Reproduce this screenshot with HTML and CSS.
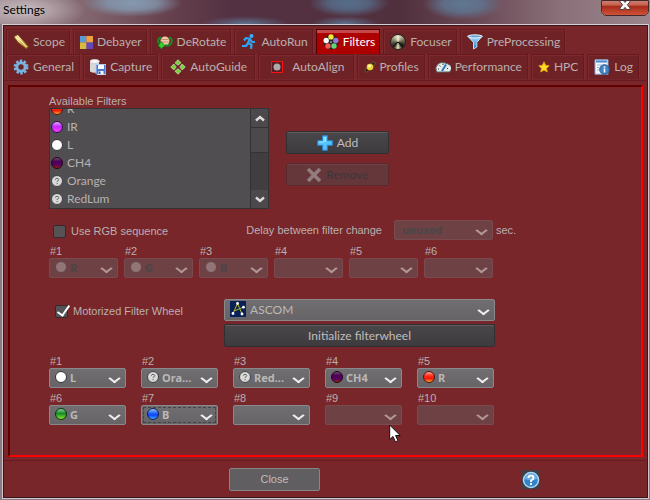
FILE: index.html
```html
<!DOCTYPE html>
<html lang="en">
<head>
<meta charset="utf-8">
<title>Settings</title>
<link rel="stylesheet" href="styles.css">
</head>
<body>
<svg class="defs" width="0" height="0" aria-hidden="true">
  <defs>
    <linearGradient id="gRed" x2="0" y2="1"><stop offset="0" stop-color="#ffb9a0"/><stop offset=".4" stop-color="#ff2a1c"/><stop offset=".65" stop-color="#f01808"/><stop offset="1" stop-color="#ffc038"/></linearGradient>
    <linearGradient id="gIr" x2="0" y2="1"><stop offset="0" stop-color="#e9b6ff"/><stop offset=".45" stop-color="#c02cff"/><stop offset="1" stop-color="#ff3cff"/></linearGradient>
    <linearGradient id="gCh4" x2="0" y2="1"><stop offset="0" stop-color="#7d5478"/><stop offset=".35" stop-color="#4a0058"/><stop offset=".7" stop-color="#5c0060"/><stop offset="1" stop-color="#a02800"/></linearGradient>
    <linearGradient id="gGreen" x2="0" y2="1"><stop offset="0" stop-color="#9ad8a0"/><stop offset=".45" stop-color="#148a28"/><stop offset="1" stop-color="#8cf02c"/></linearGradient>
    <linearGradient id="gBlue" x2="0" y2="1"><stop offset="0" stop-color="#a4ccff"/><stop offset=".45" stop-color="#1c60f0"/><stop offset=".6" stop-color="#1040ff"/><stop offset="1" stop-color="#40b8ff"/></linearGradient>
    <linearGradient id="gGold" x2="1" y2="1"><stop offset="0" stop-color="#fff2b0"/><stop offset="1" stop-color="#c08820"/></linearGradient>
    <linearGradient id="gSky" x2="0" y2="1"><stop offset="0" stop-color="#a8e4ff"/><stop offset="1" stop-color="#2878c8"/></linearGradient>
    <symbol id="red" viewBox="0 0 12 12"><circle cx="6" cy="6" r="5.500" fill="url(#gRed)" stroke="#501010"/></symbol>
    <symbol id="ir" viewBox="0 0 12 12"><circle cx="6" cy="6" r="5.500" fill="url(#gIr)" stroke="#301040"/></symbol>
    <symbol id="white" viewBox="0 0 12 12"><circle cx="6" cy="6" r="5.500" fill="#fff" stroke="#333"/></symbol>
    <symbol id="ch4" viewBox="0 0 12 12"><circle cx="6" cy="6" r="5.500" fill="url(#gCh4)" stroke="#200818"/></symbol>
    <symbol id="green" viewBox="0 0 12 12"><circle cx="6" cy="6" r="5.500" fill="url(#gGreen)" stroke="#083010"/></symbol>
    <symbol id="blue" viewBox="0 0 12 12"><circle cx="6" cy="6" r="5.500" fill="url(#gBlue)" stroke="#102050"/></symbol>
    <symbol id="unknown" viewBox="0 0 12 12"><circle cx="6" cy="6" r="5.500" fill="#d8d8d8" stroke="#444"/><path d="M4.400 4.700Q4.400 3.300 6 3.300T7.700 4.700Q7.700 5.700 6.200 6.200V7M6.100 8v1.200" fill="none" stroke="#666"/></symbol>
    <symbol id="plain" viewBox="0 0 12 12"><circle cx="6" cy="6" r="5.500" fill="#937577" stroke="#65464a"/></symbol>
  </defs>
</svg>

<header class="titlebar">
  <h1>Settings</h1>
  <button class="win-close" aria-label="Close window"><svg width="12" height="10" viewBox="0 0 12 10"><path d="M1 .5h3.400L6 2.400 7.600.5H11v1.400L8.400 4.800 11 8v1.500H7.600L6 7.400 4.400 9.500H1V8l2.600-3.200L1 1.900z" fill="#f8f8f8" stroke="#53383c"/></svg></button>
</header>

<main class="window">
  <nav class="tabs" aria-label="Settings sections">
    <div class="tab-row compact">
      <button class="tab"><svg width="16" height="16" viewBox="0 0 16 16"><path d="M.8 2.800 4.800.5 8.500 4.500 15.500 12.500 13.500 15 5 8.500z" fill="url(#gGold)" stroke="#6e4818"/><path d="M2.500 3.300 8 7l5.500 6M5 2l2 4.500" fill="none" stroke="#fff0b8"/></svg>Scope</button>
      <button class="tab"><svg width="13" height="13" viewBox="0 0 13 13"><path fill="#5b9ad8" d="M0 0h6v6H0z"/><path fill="#f0a03c" d="M6 0h7v6H6z"/><path fill="#d8b93c" d="M0 6h6v7H0z"/><path fill="#6547b5" d="M6 6h7v7H6z"/><path d="M0 6.500h13M6.500 0v13" stroke="#98756c" stroke-width=".6"/></svg>Debayer</button>
      <button class="tab"><svg width="16" height="16" viewBox="0 0 16 16"><circle cx="8" cy="7" r="4.500" fill="#ecc8a4"/><path d="M4.500 5.500h7M4 8h8" stroke="#c49270"/><path d="M4 3.500C0 5 0 8.500 4 10.500M12 3.500c4 1.500 4 5 0 8H8" fill="none" stroke="#158a28" stroke-width="2"/><path d="m4 7.500 4 4-4 3.500-1-2-2-1z" fill="#35d128" stroke="#087018" stroke-width=".7"/></svg>DeRotate</button>
      <button class="tab"><svg width="16" height="16" viewBox="0 0 16 16"><circle cx="10.500" cy="2" r="2" fill="#33b2ff"/><path d="M3 6.500 5 4l4 .8-2 4 3.500 2-.5 4M6.800 9.500 5 12H1M9 5l2 3h3" fill="none" stroke="#2aa6f8" stroke-width="2.200" stroke-linejoin="round"/></svg>AutoRun</button>
      <button class="tab active" aria-current="page"><svg width="16" height="16" viewBox="0 0 16 16"><circle cx="8" cy="8" r="7.500" fill="#2c2523"/><circle cx="8" cy="2.900" r="2.700" fill="#f2e83c"/><circle cx="3.200" cy="6.500" r="2.700" fill="#fff"/><circle cx="12.800" cy="6.500" r="2.700" fill="#9279d8"/><circle cx="5" cy="12" r="2.700" fill="#f25c54"/><circle cx="11" cy="12" r="2.700" fill="#5fd47c"/><circle cx="8" cy="8" r="1" fill="#999"/></svg>Filters</button>
      <button class="tab"><span class="focus-ball"></span>Focuser</button>
      <button class="tab"><svg width="16" height="16" viewBox="0 0 16 16"><path d="M.7 2h14.600L9.800 8.500V13L6.500 15V8.500z" fill="url(#gSky)" stroke="#b8e0f4"/><ellipse cx="8" cy="2.400" rx="7" ry="1.600" fill="#6aa4d0" stroke="#eaf6ff"/></svg>PreProcessing</button>
    </div>
    <div class="tab-row">
      <button class="tab"><svg width="16" height="16" viewBox="0 0 16 16"><circle cx="8" cy="8" r="6.200" fill="none" stroke="#78b4e4" stroke-width="2.400" stroke-dasharray="2.400 1.500"/><circle cx="8" cy="8" r="4.200" fill="none" stroke="#79b2dd" stroke-width="3"/></svg>General</button>
      <button class="tab"><svg width="16" height="16" viewBox="0 0 16 16"><path d="M0 2.500v10Q4 15 9 12.500v-10" fill="#d8d8d8"/><ellipse cx="4.700" cy="2.500" rx="4.700" ry="2" fill="#f8f8f8" stroke="#ccc"/><path d="M6 5.500h10v10H7l-1-1z" fill="#4a78cc" stroke="#b8ccf0"/><path d="M8 6h6v4H8zM8.500 12h5v3.500h-5z" fill="#f6f9ff"/><path d="M9 12.500h1.500V15H9z" fill="#345ca8"/></svg>Capture</button>
      <button class="tab roomy"><svg width="16" height="16" viewBox="0 0 16 16"><g fill="#79d82c" stroke="#b4c8a4"><path d="m8 .8 3 3-3 2.400-3-2.400zM8 15.200l3-3-3-2.400-3 2.400zM.8 8l3-3 2.400 3-2.400 3zM15.200 8l-3-3-2.400 3 2.400 3z"/></g></svg>AutoGuide</button>
      <button class="tab wide"><svg width="12" height="12" viewBox="0 0 12 12"><path d="M.5.5h11v11H.5z" fill="#5a1c20" stroke="#f11"/><circle cx="6" cy="6" r="3.500" fill="#aaa"/></svg>AutoAlign</button>
      <button class="tab"><svg width="12" height="12" viewBox="0 0 12 12"><ellipse cx="6" cy="6" rx="7" ry="2" transform="rotate(-45 6 6)" fill="#32201a" stroke="#806038" stroke-width=".7"/><circle cx="6" cy="6" r="3.300" fill="#e8d42c"/><circle cx="5.500" cy="5" r="1.500" fill="#fffac0"/></svg>Profiles</button>
      <button class="tab"><svg width="16" height="16" viewBox="0 0 16 16"><path d="M1.500 13Q-.5 8 3 5t10 0 1.500 8z" fill="#e5eaea" stroke="#596264"/><path d="M3 10h1M4.500 6.500l1 1M8 4.500V6M12 9.500h1" stroke="#333"/><path d="m7 12 4-6.500" stroke="#2878b4" stroke-width="2"/></svg>Performance</button>
      <button class="tab"><svg width="12" height="12" viewBox="0 0 12 12"><path d="m6 .8 1.600 3.400 3.700.5-2.700 2.600.7 3.700L6 9.200 2.700 11l.7-3.700L.7 4.700l3.700-.5z" fill="#ffdc24" stroke="#e39a18" stroke-width=".8"/></svg>HPC</button>
      <button class="tab"><svg width="16" height="16" viewBox="0 0 16 16"><path d="M1 .8h13v14.400H1z" fill="#f4f8fd" stroke="#88a8ce"/><path d="M2 2.500h11" stroke="#4a88ca" stroke-width="2"/><path d="M3 6h5M3 8.500h2M3 11h2" stroke="#9ab4d2"/><circle cx="10.500" cy="10.500" r="4.800" fill="#3f85c8" stroke="#235b94"/><path d="M10.500 7.300v1.400M10.500 9.500v4" stroke="#fff" stroke-width="1.600"/></svg>Log</button>
    </div>
  </nav>

  <div class="frame">
  <section class="panel" aria-label="Filters">
    <div class="available">
      <div class="list-block">
        <h2 id="list-title">Available Filters</h2>
        <div class="listbox">
          <ul role="listbox" aria-labelledby="list-title">
            <li role="option"><svg class="dot"><use href="#red"/></svg>R</li>
            <li role="option"><svg class="dot"><use href="#ir"/></svg>IR</li>
            <li role="option"><svg class="dot"><use href="#white"/></svg>L</li>
            <li role="option"><svg class="dot"><use href="#ch4"/></svg>CH4</li>
            <li role="option"><svg class="dot"><use href="#unknown"/></svg>Orange</li>
            <li role="option"><svg class="dot"><use href="#unknown"/></svg>RedLum</li>
          </ul>
          <div class="scrollbar">
            <button aria-label="Scroll up"><svg width="10" height="7" viewBox="0 0 10 7"><path d="m1 5.500 4-3.500 4 3.500" fill="none" stroke="#ddd" stroke-width="2.400"/></svg></button>
            <span class="thumb"></span>
            <button aria-label="Scroll down"><svg width="10" height="7" viewBox="0 0 10 7"><path d="m1 1.500 4 3.500 4-3.500" fill="none" stroke="#ddd" stroke-width="2.400"/></svg></button>
          </div>
        </div>
      </div>
      <div class="actions">
        <button class="btn"><svg width="16" height="16" viewBox="0 0 16 16"><path d="M5.700.7h4.600v5h5v4.600h-5v5H5.700v-5h-5V5.700h5z" fill="#56c4fc" stroke="#2988d8"/><path d="M7 2v5H2M8.500 2v5" fill="none" stroke="#a4e8ff"/></svg>Add</button>
        <button class="btn" disabled><svg width="16" height="16" viewBox="0 0 16 16"><path d="m2 2 12 12M14 2 2 14" stroke="#947c7e" stroke-width="3.600"/></svg>Remove</button>
      </div>
    </div>

    <div class="rgb-row">
      <label class="check"><input type="checkbox">Use RGB sequence</label>
      <div class="delay">
        <label for="delay">Delay between filter change</label>
        <div class="combo"><select id="delay" disabled><option>unused</option></select></div>
        <span class="unit">sec.</span>
      </div>
    </div>

    <div class="rgb-slots">
      <div class="slot"><label for="s1">#1</label><div class="combo has-dot"><select id="s1" disabled><option>R</option></select><svg class="dot"><use href="#plain"/></svg></div></div>
      <div class="slot"><label for="s2">#2</label><div class="combo has-dot"><select id="s2" disabled><option>G</option></select><svg class="dot"><use href="#plain"/></svg></div></div>
      <div class="slot"><label for="s3">#3</label><div class="combo has-dot"><select id="s3" disabled><option>B</option></select><svg class="dot"><use href="#plain"/></svg></div></div>
      <div class="slot"><label for="s4">#4</label><div class="combo"><select id="s4" disabled><option></option></select></div></div>
      <div class="slot"><label for="s5">#5</label><div class="combo"><select id="s5" disabled><option></option></select></div></div>
      <div class="slot"><label for="s6">#6</label><div class="combo"><select id="s6" disabled><option></option></select></div></div>
    </div>

    <div class="wheel">
      <label class="check"><input type="checkbox" checked>Motorized Filter Wheel</label>
      <div class="driver">
        <div class="combo large"><select aria-label="Filter wheel driver"><option>ASCOM</option></select>
          <svg class="ascom" width="16" height="16" viewBox="0 0 16 16"><path fill="#0a2058" d="M0 0h16v16H0z"/><path d="M3 12.500 7.500 2.500 12 13M4 10l10-4" fill="none" stroke="#b0b428"/><g fill="#fff"><circle cx="7.500" cy="2.500" r="1.400"/><circle cx="3" cy="12.500" r="1.400"/><circle cx="12" cy="13" r="1.400"/><circle cx="13.500" cy="6.200" r="1.400"/></g></svg>
        </div>
        <button class="btn">Initialize filterwheel</button>
      </div>
    </div>

    <div class="wheel-slots">
      <div class="slot"><label for="w1">#1</label><div class="combo has-dot"><select id="w1"><option>L</option></select><svg class="dot"><use href="#white"/></svg></div></div>
      <div class="slot"><label for="w2">#2</label><div class="combo has-dot"><select id="w2"><option>Ora...</option></select><svg class="dot"><use href="#unknown"/></svg></div></div>
      <div class="slot"><label for="w3">#3</label><div class="combo has-dot"><select id="w3"><option>Red...</option></select><svg class="dot"><use href="#unknown"/></svg></div></div>
      <div class="slot"><label for="w4">#4</label><div class="combo has-dot"><select id="w4"><option>CH4</option></select><svg class="dot"><use href="#ch4"/></svg></div></div>
      <div class="slot"><label for="w5">#5</label><div class="combo has-dot"><select id="w5"><option>R</option></select><svg class="dot"><use href="#red"/></svg></div></div>
      <div class="slot"><label for="w6">#6</label><div class="combo has-dot"><select id="w6"><option>G</option></select><svg class="dot"><use href="#green"/></svg></div></div>
      <div class="slot"><label for="w7">#7</label><div class="combo has-dot focused"><select id="w7"><option>B</option></select><svg class="dot"><use href="#blue"/></svg></div></div>
      <div class="slot"><label for="w8">#8</label><div class="combo"><select id="w8"><option></option></select></div></div>
      <div class="slot"><label for="w9">#9</label><div class="combo"><select id="w9" disabled><option></option></select></div>
        <svg class="pointer" width="12" height="19" viewBox="0 0 12 19" aria-hidden="true"><path d="M.7 1v14.500L4 12.500l2.400 5.400 2.600-1.200-2.400-5.200h4.600z" fill="#fff" stroke="#111"/></svg></div>
      <div class="slot"><label for="w10">#10</label><div class="combo"><select id="w10" disabled><option></option></select></div></div>
    </div>
  </section>
  </div>

  <footer class="footer">
    <button class="btn light">Close</button>
    <button class="help" aria-label="Help"><svg width="18" height="18" viewBox="0 0 18 18"><circle cx="9" cy="9" r="7.500" fill="#3482c8" stroke="#a9daf4" stroke-width="1.500"/><path d="M3 8a6 6 0 0 1 12 0Q9 10 3 8" fill="#70b0e4"/><path d="M6.500 7Q6.500 4.700 9 4.700T11.500 7Q11.500 8.500 9 9.500V11M9 12v2" fill="none" stroke="#fff" stroke-width="1.800"/></svg></button>
  </footer>
</main>
</body>
</html>
```

FILE: styles.css
```css
* { box-sizing: border-box; }

body {
  margin: 0;
  min-height: 100vh;
  display: flex;
  flex-direction: column;
  padding: 0 1px 1px 2px;
  background: #8d7b83;
  color: #b9b0b0;
  font: 11px/13px "Liberation Sans", Arial, sans-serif;
}

button, select, input { font: inherit; color: inherit; margin: 0; }
button { border: 0; padding: 0; background: none; }
h1, h2 { margin: 0; font: inherit; }
svg { flex: none; }
.defs { position: absolute; }

/* Window chrome */
.titlebar {
  height: 24px;
  display: flex;
  justify-content: space-between;
  align-items: flex-start;
  margin: 0 -1px 0 -2px;
  padding: 0 1px 0 3px;
  background:
    radial-gradient(ellipse 60px 20px at 26px 10px, #d8ced2cc, #d8ced200),
    radial-gradient(ellipse 50px 14px at 132px 3px, #8499b0, #8499b0cc 50%, #8499b000),
    radial-gradient(ellipse 40px 14px at 349px 3px, #566e8b, #566e8bcc 50%, #566e8b00),
    radial-gradient(ellipse 40px 16px at 463px 4px, #5f7793, #5f7793cc 50%, #5f779300),
    radial-gradient(ellipse 44px 8px at 245px 24px, #5d7491, #5d749100),
    radial-gradient(ellipse 34px 8px at 345px 24px, #5d7491, #5d749100),
    linear-gradient(90deg, #98868c 0, #876d76 70px, #65404d 170px, #543142 230px, #51303e 400px, #6b4a57 480px, #8a7079 560px, #9a858c);
}
.titlebar h1 {
  color: #000;
  font: 12px/19px Lato, sans-serif;
}
.win-close {
  width: 48px;
  height: 16px;
  display: flex;
  justify-content: center;
  border: 1px solid #e4c3bd;
  border-top: 0;
  border-radius: 0 0 5px 5px;
  outline: 1px solid #43282c;
  outline-offset: -1px;
  background: linear-gradient(#d08478 0, #c4604f 35%, #a52a18 40%, #cf5238 100%);
}

.window {
  flex: 1;
  display: flex;
  flex-direction: column;
  border: 1px solid #cfc5ca;
  border-top-color: #d8ced2;
  outline: 1px solid #35181c;
  outline-offset: -2px;
  padding: 4px 2px 0 3px;
  background: #782629;
}

/* Tabs */
.tab-row { display: flex; gap: 3px; }
.tab {
  height: 25px;
  display: flex;
  align-items: center;
  gap: 4px;
  padding: 0 5px 0 6px;
  border: 1px solid #68191f;
  border-bottom: 0;
  box-shadow: inset 1px 1px #7c2a2e, 1px 0 #7e2b2f;
  background: #6f2226;
  font: 12px/16px Lato, sans-serif;
}
.compact .tab { padding: 0 4px 0 6px; }
.tab.roomy { padding: 0 7px 0 8px; }
.tab.wide { gap: 9px; padding: 0 8px 0 12px; }
.tab.active {
  color: #fff;
  border-color: #500;
  box-shadow: inset 0 3px #c5484c;
  background: #ae0000;
}
.focus-ball {
  width: 16px;
  height: 16px;
  border-radius: 50%;
  border: 1px solid #222;
  background: conic-gradient(#f3edcf, #57543e 25%, #0c0c0a 38%, #f3e8c0 50%, #161512 62%, #66634c 75%, #f3edcf);
}

/* Filter panel */
.frame {
  flex: 1;
  display: flex;
  flex-direction: column;
  margin: 1px 0 0 -1px;
  padding: 4px 3px 3px;
  border-top: 1px solid #68191f;
  border-bottom: 1px solid #68191f;
}
.panel {
  flex: 1;
  padding: 8px 39px 0;
  border: 2px solid;
  border-color: #600000 #fe0000 #fe0000 #600000;
}

.available { display: flex; gap: 17px; }
.list-block { width: 220px; }
.listbox {
  display: flex;
  height: 101px;
  border: 1px solid #333;
  background: #504e50;
}
.listbox ul {
  flex: 1;
  display: flex;
  flex-direction: column;
  justify-content: flex-end;
  overflow: hidden;
  margin: 0;
  padding: 0 1px;
  list-style: none;
  font: 12px/18px Lato, sans-serif;
}
.listbox li {
  flex: none;
  height: 18px;
  display: flex;
  align-items: center;
  gap: 4px;
}
.dot { width: 12px; height: 12px; }
.scrollbar {
  width: 18px;
  display: flex;
  flex-direction: column;
  justify-content: space-between;
  border-left: 1px solid #333;
  background: #403e40;
}
.scrollbar button {
  height: 18px;
  display: grid;
  place-items: center;
  background: #4b494b;
}
.thumb {
  height: 26px;
  margin-bottom: auto;
  border: solid #333;
  border-width: 1px 0;
  background: #4b494c;
}

.actions {
  display: flex;
  flex-direction: column;
  gap: 9px;
  width: 103px;
  padding-top: 36px;
}
.btn {
  height: 23px;
  display: flex;
  align-items: center;
  justify-content: center;
  gap: 4px;
  border: 1px solid #303033;
  border-radius: 2px;
  box-shadow: inset 0 1px #5d5b5d;
  background: linear-gradient(#49474a, #3d3b3e);
  color: #c0bcbc;
  font: 12px/16px Lato, sans-serif;
}
.btn:disabled {
  border-color: #58292d;
  box-shadow: inset 0 1px #744044;
  background: #65373a;
  color: #3b3739;
}

.check { display: flex; align-items: center; gap: 5px; }
.check input {
  appearance: none;
  width: 13px;
  height: 13px;
  border: 1px solid #37282b;
  border-radius: 2px;
  background: #555356;
}
.check input:checked {
  overflow: visible;
  display: grid;
}
.check input:checked::after {
  content: "";
  width: 5px;
  height: 11px;
  margin: -3px 0 0 4px;
  border: solid #fff;
  border-width: 0 2px 2px 0;
  transform: rotate(35deg);
}

.rgb-row {
  display: flex;
  align-items: flex-end;
  gap: 78px;
  margin-top: 11px;
  padding-left: 4px;
}
.rgb-row .check { height: 17px; }
.delay { display: flex; align-items: center; gap: 12px; }
.delay .combo { width: 99px; }
.delay .unit { margin-left: -9px; }

.combo { position: relative; }
.combo select {
  appearance: none;
  display: block;
  width: 100%;
  height: 20px;
  padding: 0 18px 0 7px;
  border: 1px solid #8a888a;
  border-radius: 2px;
  background: linear-gradient(#706e70, #666466);
  color: #bbb8b8;
  font: bold 11px/16px "Noto Sans", sans-serif;
}
.combo::after {
  content: "";
  position: absolute;
  top: 5px;
  right: 6px;
  width: 8px;
  height: 8px;
  border: solid #eee;
  border-width: 0 3px 3px 0;
  transform: scale(.8, .6) rotate(45deg);
  pointer-events: none;
}
.combo select:disabled {
  opacity: 1;
  border-color: #794a4e;
  background: #6e4144;
  color: #4a4648;
}
.combo:has(:disabled)::after { border-color: #b39698; }
.combo.has-dot select { padding-left: 20px; }
.combo .dot { position: absolute; left: 6px; top: 3px; pointer-events: none; }
.combo.focused select { outline: 1px dashed #444; outline-offset: -3px; }
.combo.large select {
  height: 22px;
  padding-left: 25px;
  font: 12px/16px Lato, sans-serif;
}
.combo.large::after { top: 6px; }
.ascom { position: absolute; left: 6px; top: 2px; pointer-events: none; }

.slot { position: relative; }
.slot label { display: block; padding-left: 1px; }
.rgb-slots {
  display: grid;
  grid-template-columns: repeat(6, 69px);
  gap: 6px;
  margin-top: 5px;
}
.wheel {
  display: flex;
  gap: 41px;
  margin-top: 21px;
  padding-left: 6px;
}
.wheel .check { height: 24px; }
.driver {
  width: 271px;
  display: flex;
  flex-direction: column;
  gap: 3px;
}
.wheel-slots {
  display: grid;
  grid-template-columns: repeat(5, 77px);
  gap: 4px 15px;
  margin-top: 8px;
}
.pointer { position: absolute; left: 64px; top: 32px; pointer-events: none; }

.footer {
  display: grid;
  grid-template-columns: 223px 91px 1fr 19px 106px;
  align-items: center;
  height: 37px;
}
.btn.light {
  grid-column: 2;
  border-color: #858486;
  box-shadow: none;
  background: #605e60;
  font: 11px/13px "Liberation Sans", Arial, sans-serif;
}
.help {
  grid-column: 4;
  display: grid;
  place-items: center;
  height: 19px;
  border-radius: 2px;
  background: #423e48;
}
```
